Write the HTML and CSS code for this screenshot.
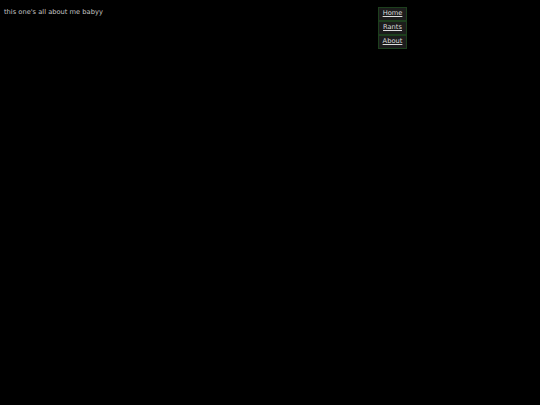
FILE: index.html
```html
<!DOCTYPE html>
<html>
<head>
<meta charset="utf-8">
<link rel="stylesheet" href="styles.css">
</head>
<body>
<div class="page">
  <p class="tagline">this one's all about me babyy</p>
  <nav class="nav">
    <a class="nav-item" href="#">Home</a>
    <a class="nav-item" href="#">Rants</a>
    <a class="nav-item" href="#">About</a>
  </nav>
</div>
</body>
</html>
```
FILE: styles.css
```css
html, body {
  margin: 0;
  padding: 0;
  background: #000;
}
body {
  font-family: "DejaVu Sans", sans-serif;
  font-size: 6.7px;
  color: #c4c4c4;
}
.page {
  display: flex;
  align-items: flex-start;
  padding: 7px 0 0 4px;
}
.tagline {
  margin: 1px 0 0;
  width: 374px;
  line-height: 8px;
}
.nav {
  display: flex;
  flex-direction: column;
  width: 29px;
}
.nav-item {
  display: block;
  text-align: center;
  color: #dcdcdc;
  background: #1c1c1c;
  border: 1px solid #1d3f1d;
  height: 12px;
  line-height: 10px;
}
```
